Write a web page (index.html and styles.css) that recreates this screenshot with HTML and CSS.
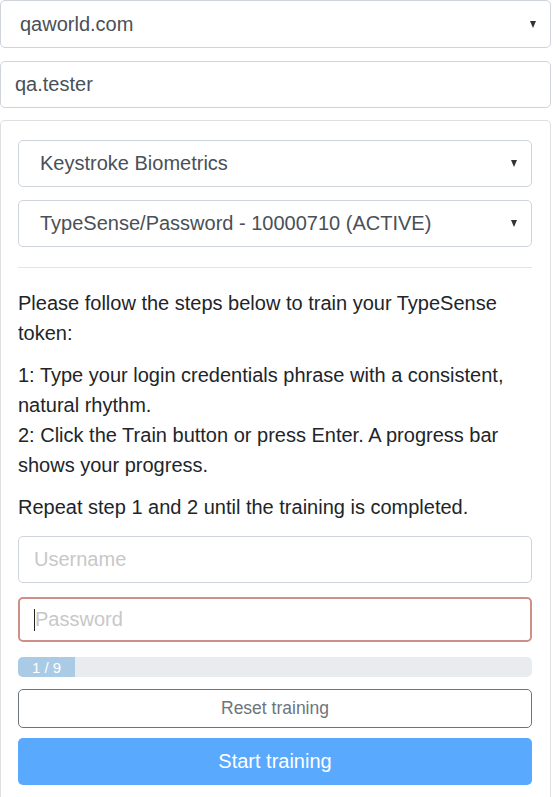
FILE: index.html
```html
<!DOCTYPE html>
<html lang="en">
<head>
<meta charset="utf-8">
<title>TypeSense training</title>
<link rel="stylesheet" href="styles.css">
</head>
<body>
<div class="page">
  <div class="control select top-select">
    <span class="value">qaworld.com</span>
    <span class="arrow"></span>
  </div>
  <div class="control input top-input">
    <span class="value">qa.tester</span>
  </div>
  <div class="card">
    <div class="control select in-select">
      <span class="value">Keystroke Biometrics</span>
      <span class="arrow"></span>
    </div>
    <div class="control select in-select">
      <span class="value">TypeSense/Password - 10000710 (ACTIVE)</span>
      <span class="arrow"></span>
    </div>
    <hr class="divider">
    <p class="text">Please follow the steps below to train your TypeSense token:</p>
    <p class="text">1: Type your login credentials phrase with a consistent, natural rhythm.<br>2: Click the Train button or press Enter. A progress bar shows your progress.</p>
    <p class="text last">Repeat step 1 and 2 until the training is completed.</p>
    <div class="control field">
      <span class="placeholder">Username</span>
    </div>
    <div class="control field focused">
      <span class="caret"></span><span class="placeholder">Password</span>
    </div>
    <div class="progress">
      <div class="progress-bar" style="width: 11.11%">1 / 9</div>
    </div>
    <div class="btn btn-outline">Reset training</div>
    <div class="btn btn-primary">Start training</div>
  </div>
</div>
</body>
</html>
```
FILE: styles.css
```css
html, body {
  margin: 0;
  padding: 0;
  background: #ffffff;
}
body {
  font-family: "Liberation Sans", Arial, sans-serif;
  color: #212529;
}
.page {
  width: 551px;
}
.control {
  box-sizing: border-box;
  border: 1px solid #ced4da;
  border-radius: 5px;
  background: #fff;
  display: flex;
  align-items: center;
  color: #495057;
  font-size: 20px;
}
.select {
  height: 48px;
  padding: 0 14px 0 19px;
  justify-content: space-between;
}
.arrow {
  width: 0;
  height: 0;
  border-left: 3.5px solid transparent;
  border-right: 3.5px solid transparent;
  border-top: 7px solid #333;
}
.top-select {
  margin-bottom: 13px;
}
.top-input {
  height: 47px;
  padding: 0 14px;
  margin-bottom: 12px;
}
.card {
  border: 1px solid #dfdfdf;
  border-bottom: none;
  border-radius: 5px 5px 0 0;
  padding: 19px 18px 14px 17px;
}
.in-select {
  height: 47px;
  padding-left: 21px;
  margin-bottom: 13px;
}
.divider {
  border: 0;
  border-top: 1px solid #e4e4e4;
  margin: 20px 0 20px;
}
.text {
  font-size: 20px;
  line-height: 30px;
  margin: 0 0 12px;
}
.text.last {
  margin-bottom: 14px;
}
.field {
  height: 47px;
  padding: 0 15px;
  margin-bottom: 14px;
}
.placeholder {
  color: #c8c8c8;
}
.focused {
  border: 2px solid #cd8f88;
  padding-left: 14px;
  height: 45px;
  margin-bottom: 15px;
}
.caret {
  width: 1px;
  height: 22px;
  background: #222;
}
.progress {
  height: 20px;
  background: #e9ecef;
  border-radius: 5px;
  overflow: hidden;
  margin-bottom: 12px;
}
.progress-bar {
  height: 100%;
  background: #a9cbe6;
  color: #fff;
  font-size: 15px;
  display: flex;
  align-items: center;
  justify-content: center;
}
.btn {
  box-sizing: border-box;
  border-radius: 5px;
  display: flex;
  align-items: center;
  justify-content: center;
}
.btn-outline {
  height: 39px;
  border: 1px solid #6c757d;
  color: #6c757d;
  font-size: 17.5px;
  margin-bottom: 10px;
}
.btn-primary {
  height: 47px;
  background: #59a9ff;
  color: #fff;
  font-size: 20px;
}
```
